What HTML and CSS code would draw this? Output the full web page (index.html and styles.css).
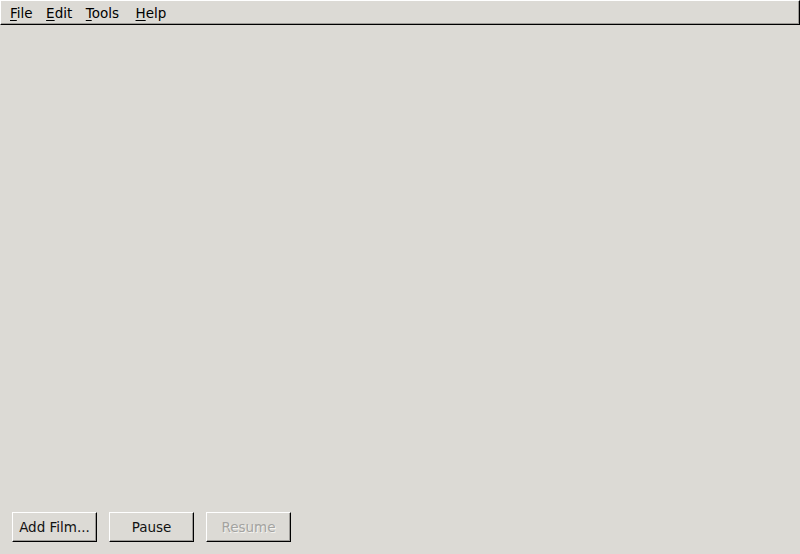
FILE: index.html
```html
<!DOCTYPE html>
<html>
<head>
<meta charset="utf-8">
<link rel="stylesheet" href="styles.css">
</head>
<body>
<div class="app">
  <div class="menubar">
    <span class="menu"><u>F</u>ile</span>
    <span class="menu"><u>E</u>dit</span>
    <span class="menu menu-wide"><u>T</u>ools</span>
    <span class="menu"><u>H</u>elp</span>
  </div>
  <div class="content"></div>
  <div class="buttons">
    <button class="btn">Add Film...</button>
    <button class="btn">Pause</button>
    <button class="btn disabled">Resume</button>
  </div>
</div>
</body>
</html>
```
FILE: styles.css
```css
html, body {
  margin: 0;
  padding: 0;
  background: #dcdad5;
}
.app {
  width: 800px;
  height: 554px;
  display: flex;
  flex-direction: column;
  font-family: "DejaVu Sans", sans-serif;
  font-size: 13.5px;
  color: #000;
}
.menubar {
  height: 23px;
  display: flex;
  align-items: center;
  padding-left: 9px;
  gap: 13.5px;
  border-top: 1px solid #ffffff;
  border-left: 1px solid #ffffff;
  border-right: 1px solid #000;
  border-bottom: 1px solid #000;
  box-shadow: inset -1px -1px 0 #9d9b97;
}
.menu {
  padding-top: 1px;
}
.menu-wide {
  padding-right: 3px;
}
.menu u {
  text-decoration: underline;
  text-underline-offset: 2px;
}
.content {
  flex: 1;
}
.buttons {
  display: flex;
  gap: 12px;
  padding: 0 0 12px 12px;
}
.btn {
  width: 85px;
  height: 30px;
  font-family: "DejaVu Sans", sans-serif;
  font-size: 13.5px;
  color: #111;
  background: #dcdad5;
  border-top: 1px solid #ffffff;
  border-left: 1px solid #ffffff;
  border-right: 1px solid #000;
  border-bottom: 1px solid #000;
  box-shadow: inset -1px -1px 0 #9d9b97;
  padding: 0;
  margin: 0;
}
.btn.disabled {
  color: #a3a3a0;
  text-shadow: 1px 1px 0 #f4f3f0;
}
```
